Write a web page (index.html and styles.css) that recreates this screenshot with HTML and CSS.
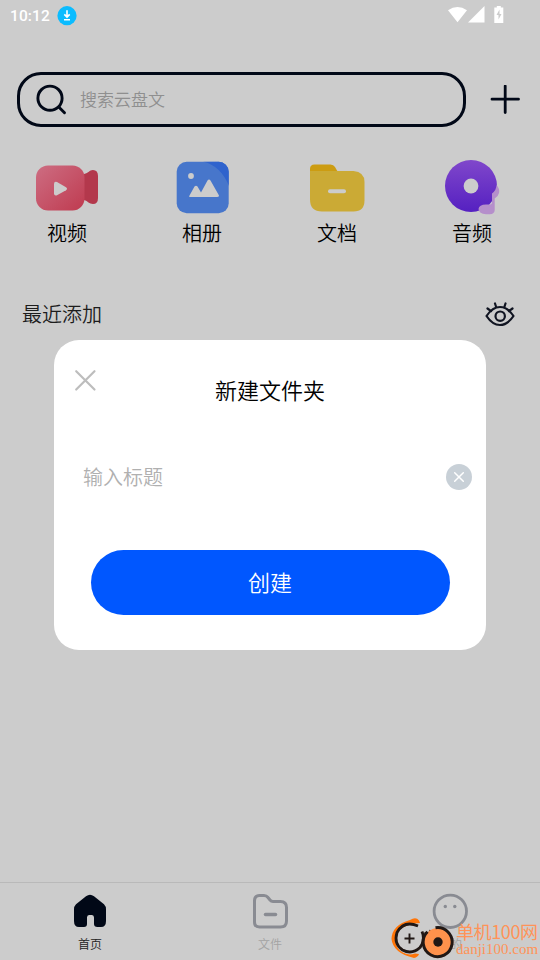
FILE: index.html
```
<!DOCTYPE html>
<html lang="zh-CN">
<head>
<meta charset="utf-8">
<title>云盘</title>
<link rel="stylesheet" href="styles.css">
</head>
<body>
<div class="app">
  <header class="status">
    <span class="clock">10:12</span>
    <svg class="download" width="20" height="20" viewBox="0 0 20 20"><circle cx="10" cy="9.700" r="9.600" fill="#0bbcff"/><path d="M10 4.200v6.500M7.300 8.400l2.700 2.700 2.700-2.700M7 13.700h6" fill="none" stroke="#fff" stroke-width="1.600"/></svg>
    <svg class="signals" width="58" height="18" viewBox="0 0 58 18" fill="#fff"><path d="M0 3.300Q9.500-3.500 19 3.300L9.500 15.300zM36.500-1v16.500H20zM46.300.5h2.500V-1h4V.5h2.500V16h-9z"/><path d="M51.500 2.500l-3 5.500h2v4.500l3-5.500h-2z" fill="#ccc"/></svg>
  </header>

  <div class="search-row">
    <div class="search">
      <svg width="32" height="32" viewBox="0 0 32 32" fill="none" stroke="#010817" stroke-width="2.900" stroke-linecap="round"><circle cx="14" cy="14.200" r="12.100"/><path d="M23 23.200l5.500 5.500"/></svg>
      <span>搜索云盘文</span>
    </div>
    <svg class="plus" width="30" height="30" viewBox="0 0 30 30" stroke="#010817" stroke-width="2.800" stroke-linecap="round"><path d="M15.200 1v26.500M2 14.200h26.500"/></svg>
  </div>

  <nav class="categories">
    <a class="category">
      <svg width="65" height="60" viewBox="0 0 65 60">
        <defs><linearGradient id="video" x1="0" y1="0" x2="1" y2="1"><stop offset="0" stop-color="#cd6d82"/><stop offset="1" stop-color="#bf3b50"/></linearGradient></defs>
        <path d="M49 18C54 17 54 14 58 14q5 0 5 6v22q0 6-5 6c-4 0-5-3-9-4z" fill="#b3384c"/>
        <rect x="1" y="9.500" width="48.500" height="45" rx="12" fill="url(#video)"/>
        <path d="M19 28q0-3 3-2l9 5.200q2 1.500 0 3L22 39.300q-3 1-3-2z" fill="#ccc"/>
      </svg>
      <span>视频</span>
    </a>
    <a class="category">
      <svg width="65" height="60" viewBox="0 0 65 60">
        <defs><clipPath id="photo"><rect x="6.700" y="5.700" width="52" height="51.500" rx="10"/></clipPath></defs>
        <g clip-path="url(#photo)"><path d="M6 5h53v53H6z" fill="#4776cb"/><path d="M33 5.500Q51 10 59 30V5z" fill="#2f63cd"/></g>
        <circle cx="21" cy="20" r="2.900" fill="#ccc"/>
        <path d="M19.500 39.500l5-9q1.500-1.500 3 0l3.500 6L37.500 24.500q1.500-2 3 0L49 39.500q0 1.500-2 1.500H20.500q-2 0-1-1.500z" fill="#ccc"/>
      </svg>
      <span>相册</span>
    </a>
    <a class="category">
      <svg width="65" height="60" viewBox="0 0 65 60">
        <path d="M5 25V13q0-4.500 4.500-4.500h16q3 0 4.500 2.500l4 7z" fill="#cc9c12"/>
        <path d="M5 15h43.500Q59.500 16 59.500 26v18.500q0 11-11 11H17q-12 0-12-12z" fill="#cbaa35"/>
        <rect x="23" y="33.300" width="18" height="4" rx="2" fill="#ccc"/>
      </svg>
      <span>文档</span>
    </a>
    <a class="category">
      <svg width="65" height="60" viewBox="0 0 65 60">
        <defs><linearGradient id="audio" x1="0" y1="0" x2="0" y2="1"><stop offset="0" stop-color="#8047cb"/><stop offset="1" stop-color="#5520c1"/></linearGradient></defs>
        <circle cx="31" cy="30" r="26" fill="url(#audio)"/><circle cx="31" cy="30" r="7.400" fill="#ccc"/>
        <path d="M52 37.500q4.500-3.500 4.500-8.500 3.500 4 2.500 8-.8 3.500-4.300 5.500v11.500q0 4-5 4.300H46q-7-.5-7.500-5.300Q39 48.500 46 48.500h4q2 0 2-2z" fill="#b58fcb"/>
      </svg>
      <span>音频</span>
    </a>
  </nav>

  <section class="recent">
    <h2>最近添加</h2>
    <svg width="32" height="28" viewBox="0 0 32 28" fill="none" stroke="#101421" stroke-width="2.200" stroke-linecap="round" stroke-linejoin="round"><path d="M2.500 17C10.500 5 21.500 5 29.500 17 21.500 29 10.500 29 2.500 17zM3.500 9.500l3.600 2.700M11 4.500l1.300 4M21.500 4.500l-1.300 4M28.500 9.500l-3.600 2.700"/><circle cx="16.200" cy="17.200" r="4.700"/></svg>
  </section>

  <footer class="tabs">
    <a class="tab active">
      <svg width="36" height="36" viewBox="0 0 36 36"><path d="M14 3.200q4-3 8 0L32 11.200q2 2 2 5V28q0 6-5 6h-3.500q-3.500 0-3.500-3v-6.500q0-2.500-2-2.500h-3q-2 0-2 2.500V31q0 3-3 3H7q-5 0-5-6V16.200q0-3 2-5z" fill="#010817"/></svg>
      <span>首页</span>
    </a>
    <a class="tab">
      <svg width="36" height="36" viewBox="0 0 36 36" fill="none" stroke="#898b92" stroke-width="3" stroke-linejoin="round"><path d="M7.500 2.500H12q2.500 0 4 2l2 2.500q1.200 1.500 3 1.500h7.500q6 0 6 6v13.500q0 6-6 6h-21q-5 0-5-5v-21q0-5.500 5-5.500z"/><path d="M13.500 21.500h10" stroke-width="3.500" stroke-linecap="round"/></svg>
      <span>文件</span>
    </a>
    <a class="tab">
      <svg width="36" height="36" viewBox="0 0 36 36" fill="none" stroke="#898b92" stroke-width="2.800"><circle cx="18.300" cy="18.300" r="16.200"/><circle cx="13.300" cy="13.500" r="1.700" fill="#898b92" stroke="none"/><circle cx="22.800" cy="13.500" r="1.700" fill="#898b92" stroke="none"/></svg>
      <span>我的</span>
    </a>
  </footer>

  <div class="dialog">
    <svg class="close" width="24" height="24" viewBox="0 0 24 24" stroke="#bdbdbd" stroke-width="2.200" stroke-linecap="round"><path d="M3.200 3.200L21.500 21.500M21.500 3.200L3.200 21.500"/></svg>
    <h1>新建文件夹</h1>
    <div class="field">
      <span>输入标题</span>
      <svg width="26" height="26" viewBox="0 0 26 26"><circle cx="13" cy="13" r="13" fill="#c8d0d7"/><path d="M8.700 8.700l8.600 8.600M17.300 8.700l-8.600 8.600" stroke="#fff" stroke-width="1.500" stroke-linecap="round"/></svg>
    </div>
    <button class="create">创建</button>
  </div>

  <div class="watermark">
    <svg width="66" height="42" viewBox="0 0 66 42" fill="none">
      <path d="M19 2q6-3.500 9 .5L29 5l-6 .5Q10 8 5.500 16.500 2 28 11 34q6 4 13 1.500l4 .5q-1 3-5 4Q2 35 .5 21 1 7 19 2z" fill="#ff7508"/>
      <path d="M27 8Q13 2 6 14.500 2.500 26 11.500 32 21 37 29 29.500q4.500-5.500 3-13l-1-3" stroke="#211815" stroke-width="2.800"/>
      <path d="M18.500 15.500v10M13.500 20.500h10" stroke="#211815" stroke-width="1.900"/>
      <path d="M35 17l-.5-3M38.500 15l1-3" stroke="#211815" stroke-width="2.200"/>
      <circle cx="47" cy="24" r="14" fill="#ff924c"/><path d="M44.500 9.800a14.500 14.500 0 1 1-8 4" stroke="#211815" stroke-width="3"/><circle cx="47" cy="24" r="4.700" fill="#211815"/>
    </svg>
    <div class="brand"><span class="brand-name">单机100网</span><span class="brand-url">danji100.com</span></div>
  </div>
</div>
</body>
</html>
```
FILE: styles.css
```
* { box-sizing: border-box; }
body { margin: 0; }
.app {
  position: relative;
  display: flex;
  flex-direction: column;
  width: 540px;
  height: 960px;
  overflow: hidden;
  background: #ccc;
  color: #000;
  font-family: "Noto Sans CJK SC", sans-serif;
  font-weight: 350;
}
h1, h2 { margin: 0; font-weight: 350; }
svg { display: block; flex: none; }

.status {
  display: flex;
  align-items: center;
  height: 32px;
  padding: 0 34px 0 10px;
}
.clock {
  width: 47px;
  color: #fff;
  font: 500 15.500px/20px Roboto, sans-serif;
  letter-spacing: .1px;
}
.signals { margin: -1px 0 0 auto; overflow: visible; }

.search-row {
  display: flex;
  align-items: center;
  justify-content: space-between;
  margin-top: 40px;
  padding: 0 20px 0 17px;
}
.search {
  display: flex;
  align-items: center;
  gap: 12px;
  width: 449px;
  height: 55px;
  padding-left: 16px;
  border: 3px solid #010817;
  border-radius: 24px;
  color: #8f8f8f;
  font-size: 17px;
}
.search span { padding-bottom: 2px; }

.categories {
  display: grid;
  grid-template-columns: repeat(4, 1fr);
  margin-top: 29px;
}
.category {
  display: flex;
  flex-direction: column;
  align-items: center;
  padding-right: 1px;
  font-size: 20px;
  line-height: 30px;
}
.category span { margin-top: 2px; }

.recent {
  display: flex;
  align-items: center;
  justify-content: space-between;
  margin-top: 49px;
  padding: 0 24px 0 22px;
  height: 32px;
}
.recent h2 { font-size: 20px; color: #1c1c1c; }

.tabs {
  display: grid;
  grid-template-columns: repeat(3, 1fr);
  height: 78px;
  margin-top: auto;
  padding-top: 10px;
  border-top: 1px solid #b9b9b9;
}
.tab {
  display: flex;
  flex-direction: column;
  align-items: center;
  gap: 6px;
  color: #a3a3a3;
  font-size: 12px;
  line-height: 18px;
}
.tab.active { color: #222; }

.dialog {
  position: absolute;
  top: 340px;
  left: 54px;
  display: flex;
  flex-direction: column;
  width: 432px;
  height: 310px;
  padding: 28px 14px 35px 19px;
  border-radius: 25px;
  background: #fff;
}
.dialog h1 {
  margin-top: -19px;
  padding-right: 5px;
  font-size: 22px;
  line-height: 32px;
  text-align: center;
}
.field {
  display: flex;
  align-items: center;
  justify-content: space-between;
  height: 40px;
  margin-top: 52px;
  padding-left: 10px;
  color: #b0b0b0;
  font-size: 20px;
}
.field span { padding-bottom: 2px; }
.create {
  width: 359px;
  height: 65px;
  margin: auto 0 0 18px;
  padding: 0 1px 3px 0;
  border: 0;
  border-radius: 33px;
  background: #0057ff;
  color: #fff;
  font: 350 22px/32px "Noto Sans CJK SC", sans-serif;
}

.watermark {
  position: absolute;
  left: 391px;
  top: 918px;
  display: flex;
}
.brand {
  display: flex;
  flex-direction: column;
  margin-top: 2px;
  margin-left: -1px;
  color: #ff9358;
  font-weight: 400;
  white-space: nowrap;
}
.brand-name { font: 18px/22px "Noto Sans CJK SC", sans-serif; letter-spacing: -.4px; }
.brand-url { font: 15px/15px "Liberation Serif", serif; }
```
